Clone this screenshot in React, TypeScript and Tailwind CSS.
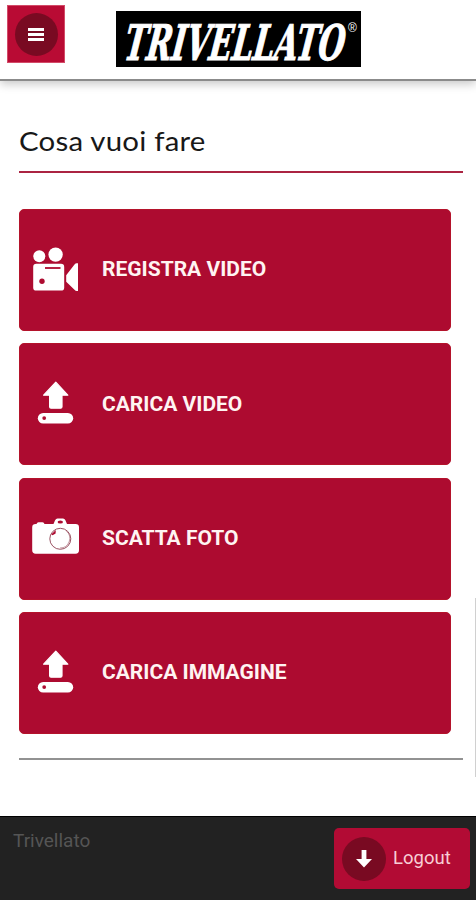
import type { ReactNode } from "react";

function VideoCameraIcon() {
  return (
    <svg viewBox="0 0 48 48" className="h-12 w-12" fill="#fff">
      <circle cx="7.3" cy="10.2" r="6" />
      <circle cx="23.6" cy="8.6" r="7.2" />
      <rect x="1.2" y="17.8" width="31" height="26.8" rx="3.2" />
      <path d="M34.2 29.3 42.5 18.6Q43.5 17.2 44.7 17.2H46V45H44.7Q43.5 45 42.5 43.8L34.2 35.8Z" />
      <path d="M13 22H28.5" stroke="#ad0b30" strokeWidth="1.8" />
      <circle cx="10" cy="35.3" r="2.7" fill="#ad0b30" />
    </svg>
  );
}

function UploadIcon() {
  return (
    <svg viewBox="0 0 48 48" className="h-12 w-12" fill="#fff">
      <path
        d="M23.8 2.2 35.8 15.2H30V26.8Q30 28.2 28.6 28.2H19Q17.6 28.2 17.6 26.8V15.2H11.6Z"
        stroke="#fff"
        strokeWidth="1.2"
        strokeLinejoin="round"
      />
      <rect x="5.8" y="33" width="35.4" height="10.6" rx="5.3" />
      <circle cx="12.2" cy="38.1" r="1.9" fill="#ad0b30" />
    </svg>
  );
}

function CameraIcon() {
  return (
    <svg viewBox="0 0 48 48" className="h-12 w-12" fill="#fff">
      <path d="M4.5 9Q5 7.2 6.5 7.2H10.5Q12.1 7.2 12.5 9H21.5L23.1 5.3Q23.9 3.6 25.5 3.6H31Q32.6 3.6 33.4 5.3L35 9H43.5Q47 9 47 12.2V35.3Q47 38.7 43.5 38.7H3.7Q.2 38.7 .2 35.3V12.2Q.2 9 3.7 9Z" />
      <ellipse cx="28.3" cy="7" rx="2.7" ry="1.5" fill="#ad0b30" />
      <circle cx="28.3" cy="23.8" r="10.5" fill="none" stroke="#9a5262" strokeWidth="1" />
      <path d="M34.5 16.2A9.6 9.6 0 0 1 28 33" fill="none" stroke="#9a5262" strokeWidth=".6" />
      <path d="M19.2 19.4 23.8 15 23.6 18.6 20.6 20.2Z" fill="#ad0b30" />
    </svg>
  );
}

function Logo() {
  return (
    <svg
      viewBox="0 0 245 56"
      className="ml-[51px] h-14 w-[245px] overflow-visible bg-black"
      role="img"
      fill="#fff"
    >
      <g transform="translate(5 48.6) skewX(-14)">
        <text
          textLength="220"
          lengthAdjust="spacingAndGlyphs"
          fontFamily="'DejaVu Serif Condensed', 'DejaVu Serif', serif"
          fontSize="49"
          fontWeight="700"
          stroke="#fff"
          strokeWidth="1"
        >
          TRIVELLATO
        </text>
      </g>
      <text x="232" y="20.5" fontFamily="'Liberation Sans', sans-serif" fontSize="12">
        ®
      </text>
    </svg>
  );
}

const actions: { label: string; icon: ReactNode }[] = [
  { label: "REGISTRA VIDEO", icon: <VideoCameraIcon /> },
  { label: "CARICA VIDEO", icon: <UploadIcon /> },
  { label: "SCATTA FOTO", icon: <CameraIcon /> },
  { label: "CARICA IMMAGINE", icon: <UploadIcon /> },
];

export default function App() {
  return (
    <div className="relative flex h-[900px] w-[476px] flex-col overflow-hidden bg-white font-['Roboto',sans-serif]">
      <header className="flex h-[81px] shrink-0 items-start border-b-2 border-[#8b8b8b] pl-[7px] shadow-[0_3px_9px_rgba(0,0,0,0.22)]">
        <button className="mt-[5px] flex h-[58px] w-[58px] items-center justify-center border border-[#d34b68] bg-[#b90b34]">
          <span className="flex h-[43px] w-[43px] items-center justify-center rounded-full bg-[#790a22]">
            <svg viewBox="0 0 16 13" className="h-[13px] w-4" fill="#fff">
              <rect y="0" width="16" height="3" />
              <rect y="5" width="16" height="3" />
              <rect y="10" width="16" height="3" />
            </svg>
          </span>
        </button>
        <div className="pt-[11px]">
          <Logo />
        </div>
      </header>

      <main className="flex flex-1 flex-col pl-[19px] pr-[13px] pt-[42px]">
        <h1 className="h-[50px] border-b-2 border-[#ab2442] font-['Lato',sans-serif] text-[27.5px] leading-[36px] text-[#181818]">
          <span className="inline-block origin-left scale-x-[1.07] tracking-[0.2px]">
            Cosa vuoi fare
          </span>
        </h1>

        {/* Actions */}
        <div className="mt-9 flex h-[525px] w-[432px] flex-col gap-[12.3px]">
          {actions.map(({ label, icon }) => (
            <button
              key={label}
              className="flex flex-1 items-center rounded-[5px] border border-[#b4132b] bg-[#ad0b30] pl-3 text-left"
            >
              {icon}
              <span className="ml-[22px] text-[21px] font-bold text-[#fff4f2]">
                {label}
              </span>
            </button>
          ))}
        </div>

        <hr className="mt-6 border-t-2 border-[#929292]" />
      </main>

      <footer className="flex h-[84px] shrink-0 items-start justify-between border-t border-black bg-[#222] pl-[13px] pr-1.5 pt-[11px]">
        <span className="text-[19px] leading-[25px] text-[#555]">Trivellato</span>
        <button className="flex h-[61px] w-[136px] items-center rounded-[5px] bg-[#b20b34] pl-2">
          <span className="flex h-11 w-11 items-center justify-center rounded-full bg-[#790a22]">
            <svg viewBox="0 0 16 18" className="h-[18px] w-4" fill="#fff">
              <path d="M5.6 0H10.4V9H16L8 17.5 0 9H5.6Z" />
            </svg>
          </span>
          <span className="ml-[7px] text-[18.5px] text-[#f8ced5]">Logout</span>
        </button>
      </footer>

      {/* Scroll indicator */}
      <div className="absolute right-0 top-[598px] h-[179px] w-px bg-[#d0d0d0]" />
    </div>
  );
}
